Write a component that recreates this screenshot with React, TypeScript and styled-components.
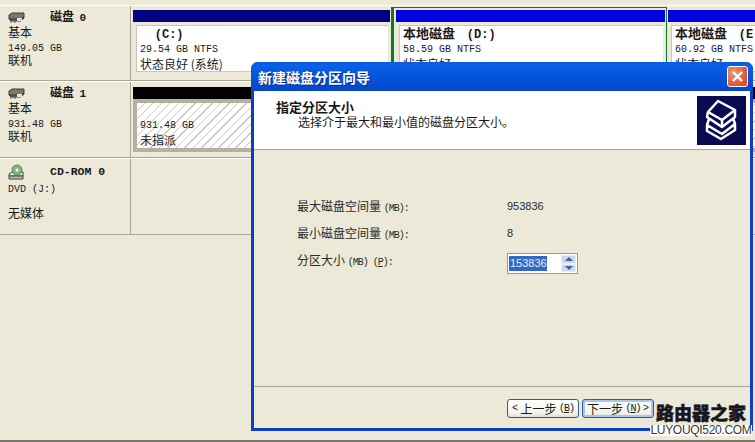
import React from 'react';
import styled, { createGlobalStyle } from 'styled-components';

const GlobalStyle = createGlobalStyle`
    html, body {
        margin: 0;
        padding: 0;
        background: #ece9d8;
        overflow: hidden;
    }
    * {
        box-sizing: border-box;
    }
`;

const Page = styled.div`
    position: relative;
    width: 755px;
    height: 442px;
    padding-top: 5px;
    overflow: hidden;
    background: #ece9d8;
    color: #1a1a1a;
    font-family: "Noto Sans CJK SC", "Liberation Sans", sans-serif;
    font-size: 12px;
    line-height: 14px;
    border-bottom: 2px solid #77766c;
`;

const DiskRow = styled.div<{ $height: number }>`
    display: grid;
    grid-template-columns: 131px 1fr;
    height: ${p => p.$height}px;
    border-top: 1px solid #fff;
    border-bottom: 1px solid #a9a797;
`;

const DiskInfo = styled.div<{ $top?: number }>`
    position: relative;
    border-right: 1px solid #a9a797;
    padding: ${p => p.$top ?? 3}px 0 0 8px;
    display: flex;
    flex-direction: column;
`;

const DiskHead = styled.div`
    display: flex;
    align-items: center;
    height: 16px;
    gap: 25px;
    font-weight: 700;
    white-space: nowrap;
`;

const InfoLine = styled.div<{ $gap?: number }>`
    height: 14px;
    margin-top: ${p => p.$gap ?? 0}px;
    white-space: nowrap;
`;

const Mono = styled.span<{ $bold?: boolean; $tight?: boolean; $size?: number }>`
    font-family: "Liberation Mono", monospace;
    font-size: ${p => p.$size ?? 10}px;
    font-weight: ${p => (p.$bold ? 700 : 400)};
    letter-spacing: ${p => (p.$tight ? '-1px' : '0')};
`;

const Partitions = styled.div<{ $top?: number }>`
    display: flex;
    padding: ${p => p.$top ?? 1}px 0 0 1px;
    width: 624px;
    overflow: hidden;
`;

const Partition = styled.div<{ $width: number; $selected?: boolean }>`
    flex: 0 0 ${p => p.$width}px;
    height: 70px;
    padding: ${p => (p.$selected ? '2px 1px 0 2px' : '3px 1px 0 1px')};
    border-style: solid;
    border-color: #0f7a1e;
    border-width: ${p => (p.$selected ? '1px 1px 0 3px' : '0')};
`;

const PartBar = styled.div<{ $color: string }>`
    height: 12px;
    background: ${p => p.$color};
`;

const PartBody = styled.div`
    margin: 3px 2px 0 3px;
    height: 47px;
    padding: 0 0 0 3px;
    background: #fff;
    border: 1px solid #c9c7b8;
    border-right: none;
    white-space: nowrap;
`;

const HatchBody = styled.div`
    height: 53px;
    padding: 13px 0 0 3px;
    border: 4px solid #b5b1a0;
    border-right: none;
    white-space: nowrap;
    background: repeating-linear-gradient(135deg, #fff 0 5px, #c6c6c6 5px 6px);
`;

const PartTitle = styled.div`
    font-size: 13px;
    font-weight: 700;
    height: 14px;
`;

const Dialog = styled.div`
    position: absolute;
    left: 251px;
    top: 62px;
    width: 502px;
    height: 369px;
    display: flex;
    flex-direction: column;
    background: #ece9d8;
    border: 3px solid #0a3fc4;
    border-top: none;
    border-radius: 7px 7px 0 0;
`;

const TitleBar = styled.div`
    margin: 0 -3px;
    height: 29px;
    flex: none;
    padding: 0 5px 0 7px;
    display: flex;
    align-items: center;
    justify-content: space-between;
    border-radius: 7px 7px 0 0;
    background: linear-gradient(180deg, #0a5ae0 0, #0a5fe8 12%, #0552d8 60%, #0646c8 100%);
    color: #fff;
    font-weight: 700;
    font-size: 14px;
    text-shadow: 1px 1px 0 #0a2f90;
`;

const CloseButton = styled.div`
    width: 21px;
    height: 21px;
    display: flex;
    align-items: center;
    justify-content: center;
    border: 1px solid #fff;
    border-radius: 3px;
    background: radial-gradient(circle at 30% 30%, #ea9a7c, #d9502a 75%);
`;

const Header = styled.div`
    flex: none;
    height: 59px;
    padding: 9px 4px 0 22px;
    display: flex;
    justify-content: space-between;
    background: #fff;
    border-bottom: 1px solid #aca899;
`;

const HeaderTitle = styled.div`
    font-size: 13px;
    font-weight: 700;
    height: 15px;
`;

const HeaderSub = styled.div`
    padding-left: 22px;
    height: 15px;
`;

const BookBadge = styled.svg`
    margin-top: -4px;
    display: block;
`;

const Body = styled.div`
    flex: 1;
    padding: 49px 0 0 43px;
    display: flex;
    flex-direction: column;
    gap: 13px;
`;

const FieldRow = styled.div`
    display: grid;
    grid-template-columns: 210px auto;
    align-items: start;
    height: 14px;
    color: #2a2a2a;
`;

const Value = styled.span`
    font-family: "Liberation Sans", sans-serif;
    font-size: 11px;
`;

const Spin = styled.div`
    width: 71px;
    height: 21px;
    display: flex;
    align-items: center;
    justify-content: space-between;
    padding: 0 1px 0 1px;
    background: #fff;
    border: 1px solid #7f9db9;
`;

const Selected = styled.span`
    background: #316ac5;
    color: #e8ecf5;
    font-family: "Liberation Sans", sans-serif;
    font-size: 11px;
    line-height: 15px;
    padding: 0 1px;
    width: 38px;
`;

const SpinArrows = styled.div`
    display: flex;
    flex-direction: column;
    width: 15px;
    height: 17px;
`;

const SpinArrow = styled.div<{ $down?: boolean }>`
    flex: 1;
    display: flex;
    align-items: center;
    justify-content: center;
    background: #c8d8f4;
    border: 1px solid #e6edf9;
    &::after {
        content: "";
        border-left: 4px solid transparent;
        border-right: 4px solid transparent;
        ${p => (p.$down ? 'border-top: 4px solid #4d6185;' : 'border-bottom: 4px solid #4d6185;')}
    }
`;

const Footer = styled.div`
    flex: none;
    height: 42px;
    border-top: 1px solid #aca899;
    display: flex;
    gap: 3px;
    padding: 12px 0 0 253px;
`;

const WizardButton = styled.div<{ $focus?: boolean }>`
    width: 72px;
    height: 19px;
    padding: 0 4px;
    display: flex;
    align-items: center;
    justify-content: space-between;
    background: linear-gradient(180deg, #fff, #f2f1ea 80%, #dedccd);
    border: 1px solid #2f5f92;
    border-radius: 3px;
    box-shadow: ${p => (p.$focus ? 'inset 0 0 0 2px #a9c4ee' : 'none')};
    white-space: nowrap;
`;

const Watermark = styled.div`
    position: absolute;
    left: 650px;
    top: 399px;
    width: 102px;
    text-align: center;
`;

const WatermarkName = styled.div`
    font-size: 18px;
    line-height: 26px;
    font-weight: 900;
    color: #17171f;
    -webkit-text-stroke: 0.5px #17171f;
`;

const WatermarkUrl = styled.div`
    font-family: "Liberation Sans", sans-serif;
    font-size: 12px;
    line-height: 11px;
    background: #fff;
    color: #3a3a3a;
    white-space: nowrap;
    letter-spacing: -0.3px;
`;

function DiskIcon() {
    return (
        <svg width="17" height="11" viewBox="0 0 17 11">
            <path d="M1 3 L4 1 H16 V6 L13 9 H3 L1 7 Z" fill="#777870" stroke="#3d3d3d" />
            <path d="M1 7 H13 L16 5" fill="none" stroke="#2c2c2c" />
            <rect x="9" y="6" width="5" height="3" fill="#e4e4da" />
            <path d="M3 9 V11 M7 9 V11" stroke="#555" />
        </svg>
    );
}

function CdIcon() {
    return (
        <svg width="17" height="16" viewBox="0 0 17 16">
            <path d="M1 10 L4 8 H15 V12 H1 Z" fill="#e6e6dc" stroke="#444" />
            <path d="M1 12 H15 V15 H1 Z" fill="#b9b9ae" stroke="#444" />
            <circle cx="9" cy="6" r="5" fill="#7fb878" stroke="#4f8f60" />
            <circle cx="9" cy="6" r="1.5" fill="#fff" />
        </svg>
    );
}

function BookStack() {
    return (
        <BookBadge width="49" height="49" viewBox="0 0 49 49">
            <rect width="49" height="49" fill="#0b0b52" />
            <path d="M10 29 L25 38 L38 28 V34 L24 43 L10 35 Z" fill="#0b0b52" stroke="#fff" strokeWidth="2.5" strokeLinejoin="round" />
            <path d="M11 16 L21 5 L38 14 L25 24 Z" fill="#0b0b52" stroke="#fff" strokeWidth="2.5" strokeLinejoin="round" />
            <path d="M11 16 L10 21 L25 31 L38 21 V14" fill="none" stroke="#fff" strokeWidth="2.5" strokeLinejoin="round" />
            <path d="M25 24 V31" stroke="#fff" strokeWidth="2.5" />
            <path d="M12 23 L10 29 M36 22 L38 28" stroke="#fff" strokeWidth="2.5" />
        </BookBadge>
    );
}

export default function App() {
    return (
        <>
            <GlobalStyle />
            <Page>
                <DiskRow $height={76}>
                    <DiskInfo>
                        <DiskHead><DiskIcon /><span>磁盘 &nbsp;<Mono $bold $size={11}>0</Mono></span></DiskHead>
                        <InfoLine>基本</InfoLine>
                        <InfoLine><Mono>149.05 GB</Mono></InfoLine>
                        <InfoLine>联机</InfoLine>
                    </DiskInfo>
                    <Partitions>
                        <Partition $width={259}>
                            <PartBar $color="#000080" />
                            <PartBody>
                                <PartTitle>&nbsp;&nbsp;&nbsp;&nbsp;&nbsp;<Mono $bold $size={12}>(C:)</Mono></PartTitle>
                                <div><Mono>29.54 GB NTFS</Mono></div>
                                <div>状态良好 (系统)</div>
                            </PartBody>
                        </Partition>
                        <Partition $width={276} $selected>
                            <PartBar $color="#0000e0" />
                            <PartBody>
                                <PartTitle>本地磁盘 &nbsp;&nbsp;&nbsp;<Mono $bold $size={12}>(D:)</Mono></PartTitle>
                                <div><Mono>58.59 GB NTFS</Mono></div>
                                <div>状态良好</div>
                            </PartBody>
                        </Partition>
                        <Partition $width={92}>
                            <PartBar $color="#0000e0" />
                            <PartBody>
                                <PartTitle>本地磁盘 &nbsp;&nbsp;&nbsp;<Mono $bold $size={12}>(E:)</Mono></PartTitle>
                                <div><Mono>60.92 GB NTFS</Mono></div>
                                <div>状态良好</div>
                            </PartBody>
                        </Partition>
                    </Partitions>
                </DiskRow>
                <DiskRow $height={77}>
                    <DiskInfo>
                        <DiskHead><DiskIcon /><span>磁盘 &nbsp;<Mono $bold $size={11}>1</Mono></span></DiskHead>
                        <InfoLine>基本</InfoLine>
                        <InfoLine><Mono>931.48 GB</Mono></InfoLine>
                        <InfoLine>联机</InfoLine>
                    </DiskInfo>
                    <Partitions $top={2}>
                        <Partition $width={626}>
                            <PartBar $color="#000" />
                            <HatchBody>
                                <div><Mono>931.48 GB</Mono></div>
                                <div>未指派</div>
                            </HatchBody>
                        </Partition>
                    </Partitions>
                </DiskRow>
                <DiskRow $height={77}>
                    <DiskInfo $top={5}>
                        <DiskHead><CdIcon /><Mono $bold $size={11.5}>CD-ROM 0</Mono></DiskHead>
                        <InfoLine><Mono>DVD (J:)</Mono></InfoLine>
                        <InfoLine $gap={12}>无媒体</InfoLine>
                    </DiskInfo>
                    <div />
                </DiskRow>

                <Dialog>
                    <TitleBar>
                        <span>新建磁盘分区向导</span>
                        <CloseButton>
                            <svg width="13" height="13" viewBox="0 0 13 13">
                                <path d="M2 2 L11 11 M11 2 L2 11" stroke="#fff" strokeWidth="2.4" />
                            </svg>
                        </CloseButton>
                    </TitleBar>
                    <Header>
                        <div>
                            <HeaderTitle>指定分区大小</HeaderTitle>
                            <HeaderSub>选择介于最大和最小值的磁盘分区大小。</HeaderSub>
                        </div>
                        <BookStack />
                    </Header>
                    <Body>
                        <FieldRow>
                            <span>最大磁盘空间量 <Mono $tight>(MB):</Mono></span>
                            <Value>953836</Value>
                        </FieldRow>
                        <FieldRow>
                            <span>最小磁盘空间量 <Mono $tight>(MB):</Mono></span>
                            <Value>8</Value>
                        </FieldRow>
                        <FieldRow>
                            <span>分区大小 <Mono $tight>(MB) (<u>P</u>):</Mono></span>
                            <Spin>
                                <Selected>153836</Selected>
                                <SpinArrows>
                                    <SpinArrow />
                                    <SpinArrow $down />
                                </SpinArrows>
                            </Spin>
                        </FieldRow>
                    </Body>
                    <Footer>
                        <WizardButton>
                            <Mono>&lt;</Mono>
                            <span>上一步</span>
                            <Mono $tight>(<u>B</u>)</Mono>
                        </WizardButton>
                        <WizardButton $focus>
                            <span>下一步</span>
                            <Mono $tight>(<u>N</u>)</Mono>
                            <Mono>&gt;</Mono>
                        </WizardButton>
                    </Footer>
                </Dialog>

                <Watermark>
                    <WatermarkName>路由器之家</WatermarkName>
                    <WatermarkUrl>LUYOUQI520.COM</WatermarkUrl>
                </Watermark>
            </Page>
        </>
    );
}
